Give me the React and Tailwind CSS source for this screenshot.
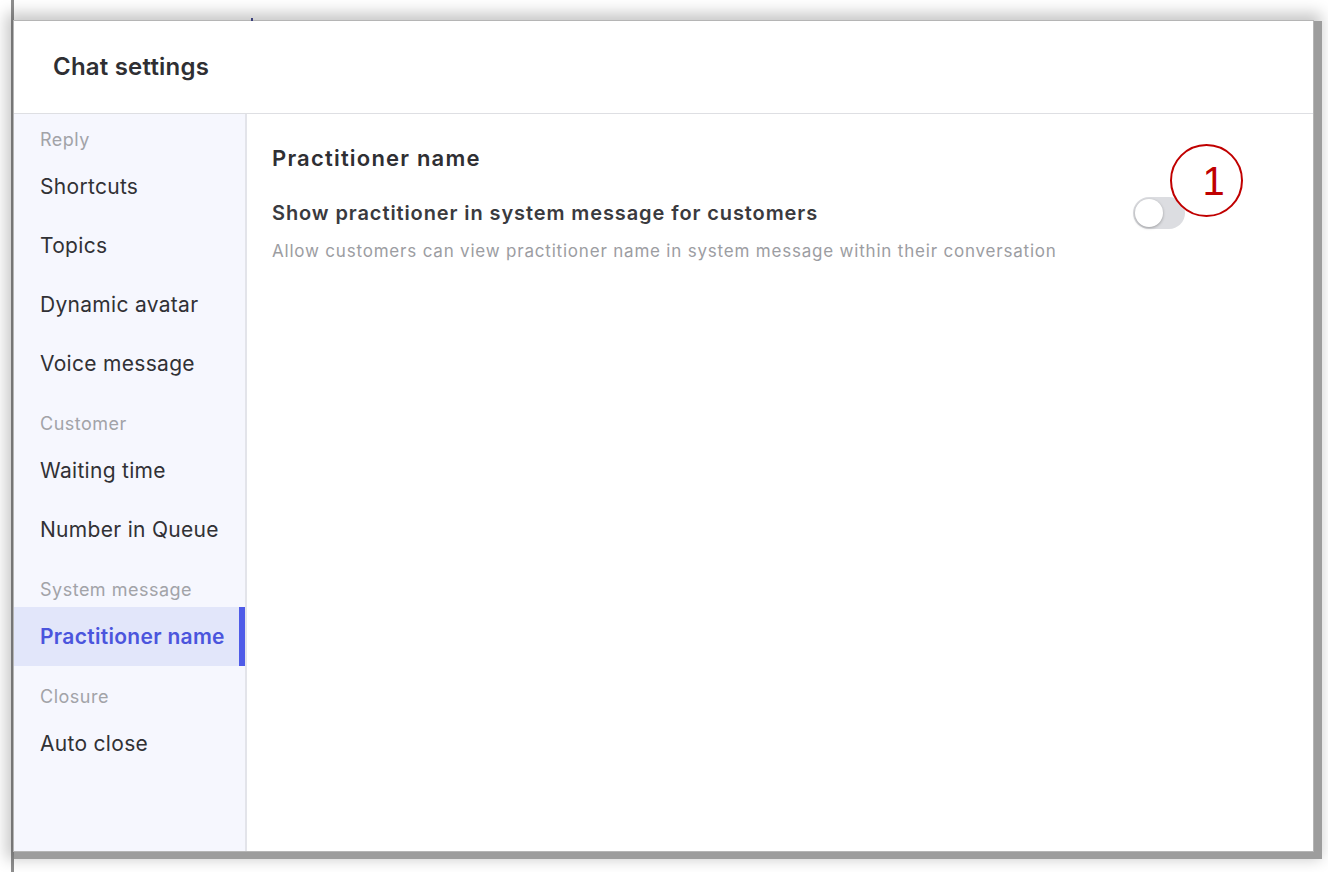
import { useState } from 'react'

const GROUPS = [
  { label: 'Reply', items: ['Shortcuts', 'Topics', 'Dynamic avatar', 'Voice message'] },
  { label: 'Customer', items: ['Waiting time', 'Number in Queue'] },
  { label: 'System message', items: ['Practitioner name'] },
  { label: 'Closure', items: ['Auto close'] },
]

function Toggle({ on, onClick }) {
  return (
    <button
      type="button"
      onClick={onClick}
      className={`relative w-[52px] h-[32px] rounded-full shrink-0 ${on ? 'bg-[#4f5be8]' : 'bg-[#dcdde1]'}`}
    >
      <span
        className={`absolute top-[2px] w-[28px] h-[28px] rounded-full bg-white shadow-[0_1px_3px_rgba(0,0,0,0.3)] ${on ? 'left-[22px]' : 'left-[2px]'}`}
      />
    </button>
  )
}

export default function App() {
  const [active, setActive] = useState('Practitioner name')
  const [showName, setShowName] = useState(false)

  return (
    <div className="w-[1328px] h-[872px] bg-white overflow-hidden pl-[11px] font-['Inter',sans-serif]">
      <div className="h-full border-l-[3px] border-[#8e8e8e] pt-[21px] relative">
        <span className="absolute left-[237px] top-[18px] w-[2px] h-[3px] bg-[#3a3f7a]" />
        <div className="w-[1299px] h-[830px] bg-white flex flex-col shadow-[0_0_0_1px_#b5b5b5,9px_0_0_0_#9d9d9d,0_8px_0_0_#9d9d9d,9px_8px_0_0_#9d9d9d,0_0_14px_8px_rgba(0,0,0,0.22)]">
          <div className="h-[93px] shrink-0 border-b border-[#dedfe3] flex items-center pl-[39px] pb-[1px]">
            <h1 className="text-[24px] font-semibold text-[#2f2f33] tracking-[0.2px]">Chat settings</h1>
          </div>

          <div className="flex flex-1 min-h-0">
            <nav className="w-[233px] shrink-0 bg-[#f6f7fe] border-r-2 border-[#e3e4ea] pt-[4px]">
              {GROUPS.map((group, gi) => (
                <div key={group.label}>
                  <div className={`pl-[26px] pb-[6px] text-[18px] leading-[22px] tracking-[0.5px] text-[#a2a3a8] ${gi === 0 ? 'pt-[11px]' : 'pt-[20px]'}`}>
                    {group.label}
                  </div>
                  {group.items.map(item => {
                    const isActive = item === active
                    return (
                      <button
                        key={item}
                        type="button"
                        onClick={() => setActive(item)}
                        className={`w-full h-[59px] flex items-center pl-[26px] text-left text-[21px] tracking-[0.3px] border-r-[6px] ${
                          isActive
                            ? 'bg-[#e2e6fa] text-[#4b55dd] font-semibold border-[#4f5be8] mr-[-2px]'
                            : 'text-[#313135] border-transparent'
                        }`}
                      >
                        {item}
                      </button>
                    )
                  })}
                </div>
              ))}
            </nav>

            <main className="flex-1 pl-[25px] pr-[128px] pt-[30px] relative">
              <h2 className="text-[22px] font-semibold text-[#2f2f33] leading-[28px] tracking-[1.2px]">Practitioner name</h2>
              <div className="flex items-start justify-between mt-[28px]">
                <div>
                  <div className="text-[20px] font-semibold text-[#3a3a3e] leading-[26px] tracking-[0.9px]">
                    Show practitioner in system message for customers
                  </div>
                  <div className="text-[17px] text-[#9c9da2] leading-[24px] tracking-[0.8px] mt-[13px]">
                    Allow customers can view practitioner name in system message within their conversation
                  </div>
                </div>
                <div className="mt-[-3px]">
                  <Toggle on={showName} onClick={() => setShowName(!showName)} />
                </div>
              </div>
              <div className="absolute left-[923px] top-[30px] w-[73px] h-[73px] rounded-full border-2 border-[#c00000] bg-white flex items-center justify-center pl-[14px]">
                <span className="text-[40px] leading-none text-[#c00000] font-['Liberation_Sans',sans-serif]">1</span>
              </div>
            </main>
          </div>
        </div>
      </div>
    </div>
  )
}
